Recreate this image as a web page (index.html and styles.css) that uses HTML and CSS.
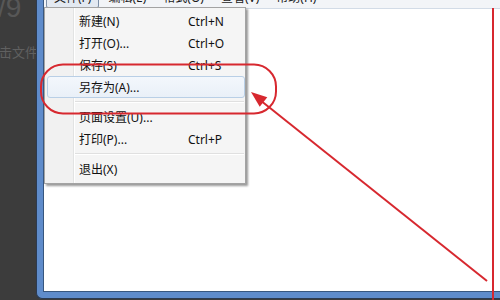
FILE: index.html
```html
<!DOCTYPE html>
<html lang="zh">
<head>
<meta charset="utf-8">
<link rel="stylesheet" href="styles.css">
</head>
<body>
<div class="page">
  <div class="side">
    <div class="side-num">/9</div>
    <div class="side-text">击文件</div>
  </div>
  <div class="frame">
    <div class="client">
      <div class="menubar">
        <span class="mb-item active">文件(F)</span>
        <span class="mb-item">编辑(E)</span>
        <span class="mb-item">格式(O)</span>
        <span class="mb-item">查看(V)</span>
        <span class="mb-item">帮助(H)</span>
      </div>
      <div class="doc"></div>
      <div class="menu">
        <div class="item"><span class="label">新建(N)</span><span class="key">Ctrl+N</span></div>
        <div class="item"><span class="label">打开(O)...</span><span class="key">Ctrl+O</span></div>
        <div class="item"><span class="label">保存(S)</span><span class="key">Ctrl+S</span></div>
        <div class="item hot"><span class="label">另存为(A)...</span><span class="key"></span></div>
        <div class="sep"></div>
        <div class="item"><span class="label">页面设置(U)...</span><span class="key"></span></div>
        <div class="item"><span class="label">打印(P)...</span><span class="key">Ctrl+P</span></div>
        <div class="sep"></div>
        <div class="item"><span class="label">退出(X)</span><span class="key"></span></div>
      </div>
    </div>
  </div>
  <svg class="marks" viewBox="0 0 500 300" width="500" height="300">
    <rect x="41" y="64.5" width="235" height="49" rx="22" ry="22" fill="none" stroke="#d7282f" stroke-width="2"/>
    <line x1="487" y1="281" x2="260" y2="100" stroke="#d7282f" stroke-width="2"/>
    <polygon points="251,92 259.7,106.7 267.3,97.3" fill="#d7282f"/>
    <line x1="493" y1="8" x2="493" y2="300" stroke="#d7282f" stroke-width="2"/>
  </svg>
</div>
</body>
</html>
```
FILE: styles.css
```css
html, body {
  margin: 0;
  padding: 0;
}
body {
  width: 500px;
  height: 300px;
  overflow: hidden;
  background: #3c3c3c;
  font-family: "Noto Sans", "Noto Sans CJK SC", sans-serif;
}
.page {
  position: relative;
  display: flex;
  width: 500px;
  height: 300px;
}
.side {
  width: 36px;
  flex: none;
  overflow: hidden;
  color: #5a5a5a;
}
.side-num {
  font-size: 28px;
  line-height: 28px;
  margin-top: -6px;
  margin-left: -2px;
  color: #575757;
  font-family: "Liberation Sans", sans-serif;
}
.side-text {
  white-space: nowrap;
  font-size: 13px;
  line-height: 16px;
  margin-top: 22px;
  margin-left: -1px;
  color: #606060;
  font-family: "Noto Sans CJK SC", sans-serif;
}
.frame {
  flex: 1;
  height: 299px;
  box-sizing: border-box;
  background: #5f8ccb;
  border-left: 1px solid #2b3b52;
  border-bottom: 1px solid #2b3b52;
  border-bottom-left-radius: 6px;
  padding: 0 0 6px 6px;
  display: flex;
}
.client {
  position: relative;
  flex: 1;
  display: flex;
  flex-direction: column;
  background: #fff;
  border-left: 1px solid #38577f;
  border-bottom: 1px solid #38577f;
}
.menubar {
  height: 20px;
  margin-top: -12px;
  display: flex;
  align-items: center;
  padding-left: 2px;
  background: #f2f4f7;
  border-bottom: 1px solid #d2dbe6;
  font-size: 12px;
  color: #1a1a1a;
  flex: none;
}
.mb-item {
  padding: 0 7px;
  margin-right: 1px;
  line-height: 18px;
  border: 1px solid transparent;
}
.mb-item.active {
  border-color: #7c8ea6;
  background: #e3e9f1;
  border-radius: 2px;
}
.doc {
  flex: 1;
}
.menu {
  position: absolute;
  left: 0;
  top: 7px;
  width: 202px;
  box-sizing: border-box;
  padding: 2px 0 3px 2px;
  border: 1px solid #a3a3a3;
  background: linear-gradient(to right, #f1f1f1 28px, #e2e3e3 28px, #e2e3e3 29px, #ffffff 29px, #ffffff 30px, #f5f5f5 30px);
  box-shadow: 2px 2px 2px rgba(0, 0, 0, 0.4);
  font-size: 12px;
  color: #111;
}
.item {
  display: flex;
  align-items: center;
  height: 22px;
  box-sizing: border-box;
  padding-left: 31px;
  border: 1px solid transparent;
  border-radius: 3px;
}
.item.hot {
  border-color: #b9cfe6;
  background: linear-gradient(#f3f7fc, #e9f0f8);
}
.label {
  width: 109px;
  white-space: nowrap;
}
.key {
  white-space: nowrap;
}
.sep {
  height: 8px;
  margin-left: 28px;
  margin-right: 1px;
  background: linear-gradient(#f5f5f5 3px, #e0e0e0 3px, #e0e0e0 4px, #ffffff 4px, #ffffff 5px, #f5f5f5 5px);
}
.marks {
  position: absolute;
  left: 0;
  top: 0;
  pointer-events: none;
}
```
